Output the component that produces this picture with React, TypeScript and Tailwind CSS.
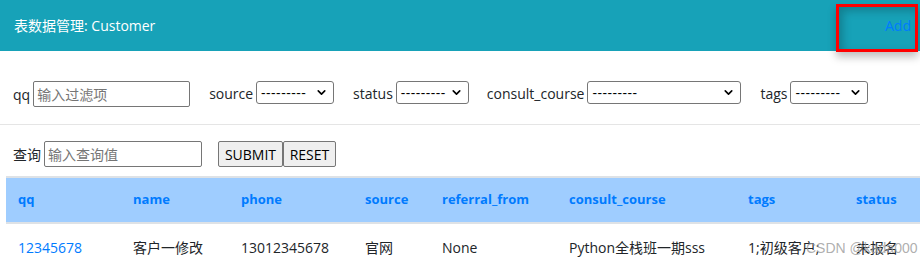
import { ChevronDown } from 'lucide-react';

const font = { fontFamily: '"Open Sans", "Noto Sans CJK SC", sans-serif' };

function FakeSelect({ width }: { width: string }) {
  return (
    <div className={`${width} h-[23px] -mt-[3px] flex items-center justify-between border border-[#767676] rounded-[3px] bg-white pl-[4px] pr-[5px]`}>
      <span className="text-[14px] leading-none text-black tracking-[0.5px]">---------</span>
      <ChevronDown className="w-[13px] h-[13px] text-black" strokeWidth={3} />
    </div>
  );
}

export default function App() {
  const headers = [
    { label: 'qq', w: 'w-[115px]' },
    { label: 'name', w: 'w-[108px]' },
    { label: 'phone', w: 'w-[124px]' },
    { label: 'source', w: 'w-[77px]' },
    { label: 'referral_from', w: 'w-[127px]' },
    { label: 'consult_course', w: 'w-[179px]' },
    { label: 'tags', w: 'w-[108px]' },
    { label: 'status', w: 'w-[70px]' },
  ];
  const row = ['12345678', '客户一修改', '13012345678', '官网', 'None', 'Python全栈班一期sss', '1;初级客户;', '未报名'];

  return (
    <div className="relative w-[920px] h-[269px] overflow-hidden bg-white text-[#212529]" style={font}>
      {/* Header */}
      <div className="h-[51px] bg-[#17a2b8] flex items-center justify-between pl-[14px] pr-[9px]">
        <span className="text-white text-[14px]">表数据管理: Customer</span>
        <span className="text-[#007bff] text-[14px]">Add</span>
      </div>

      {/* red annotation box */}
      <div className="absolute left-[836px] top-[4px] w-[82px] h-[48px] border-[3px] border-[#ff0000] shadow-[inset_4px_4px_8px_rgba(0,0,0,0.22),0_5px_8px_rgba(0,0,0,0.25)]" />

      {/* Filters */}
      <div className="pl-[13px] pt-[30px] pb-[17px] text-[14px]">
        <div className="flex items-center h-[26px]">
          <span className="mr-[3px]">qq</span>
          <div className="w-[157px] h-[26px] border border-[#767676] rounded-[2px] flex items-center pl-[3px] text-[#757575]">输入过滤项</div>
          <span className="ml-[19px] mr-[3px] -mt-[2px]">source</span>
          <FakeSelect width="w-[78px]" />
          <span className="ml-[19px] mr-[3px] -mt-[2px]">status</span>
          <FakeSelect width="w-[73px]" />
          <span className="ml-[18px] mr-[3px] -mt-[2px]">consult_course</span>
          <FakeSelect width="w-[154px]" />
          <span className="ml-[19px] mr-[3px] -mt-[2px]">tags</span>
          <FakeSelect width="w-[78px]" />
        </div>
      </div>

      <div className="h-[1px] bg-[#e5e5e5]" />

      {/* Query */}
      <div className="pl-[13px] pt-[16px] text-[14px]">
        <div className="flex items-center h-[26px]">
          <span className="mr-[3px]">查询</span>
          <div className="w-[158px] h-[26px] border border-[#767676] rounded-[2px] flex items-center pl-[3px] text-[#757575]">输入查询值</div>
          <button className="ml-[16px] w-[65px] h-[26px] bg-[#efefef] border border-[#767676] rounded-[2px] text-black">SUBMIT</button>
          <button className="w-[53px] h-[26px] bg-[#efefef] border border-[#767676] rounded-[2px] text-black">RESET</button>
        </div>
      </div>

      {/* Table */}
      <div className="ml-[6px] mt-[9px] w-[914px] text-[14px]">
        <div className="flex items-center h-[48px] bg-[#9fcdff] border-t-2 border-b-2 border-[#dee2e6] pl-[12px]">
          {headers.map((h) => (
            <div key={h.label} className={`${h.w} shrink-0 font-bold text-[#007bff] text-[13px]`}>{h.label}</div>
          ))}
        </div>
        <div className="flex items-center h-[46px] pl-[12px]">
          {row.map((c, i) => (
            <div key={i} className={`${headers[i].w} shrink-0 whitespace-nowrap ${i === 0 ? 'text-[#007bff]' : 'text-[#212529]'}`}>{c}</div>
          ))}
        </div>
      </div>

      {/* watermark */}
      <div className="absolute left-[806px] top-[238px] whitespace-nowrap text-[14px] text-[#9a9a9a]/80" style={{ fontFamily: '"Liberation Sans", sans-serif' }}>
        CSDN @kada000
      </div>
    </div>
  );
}
